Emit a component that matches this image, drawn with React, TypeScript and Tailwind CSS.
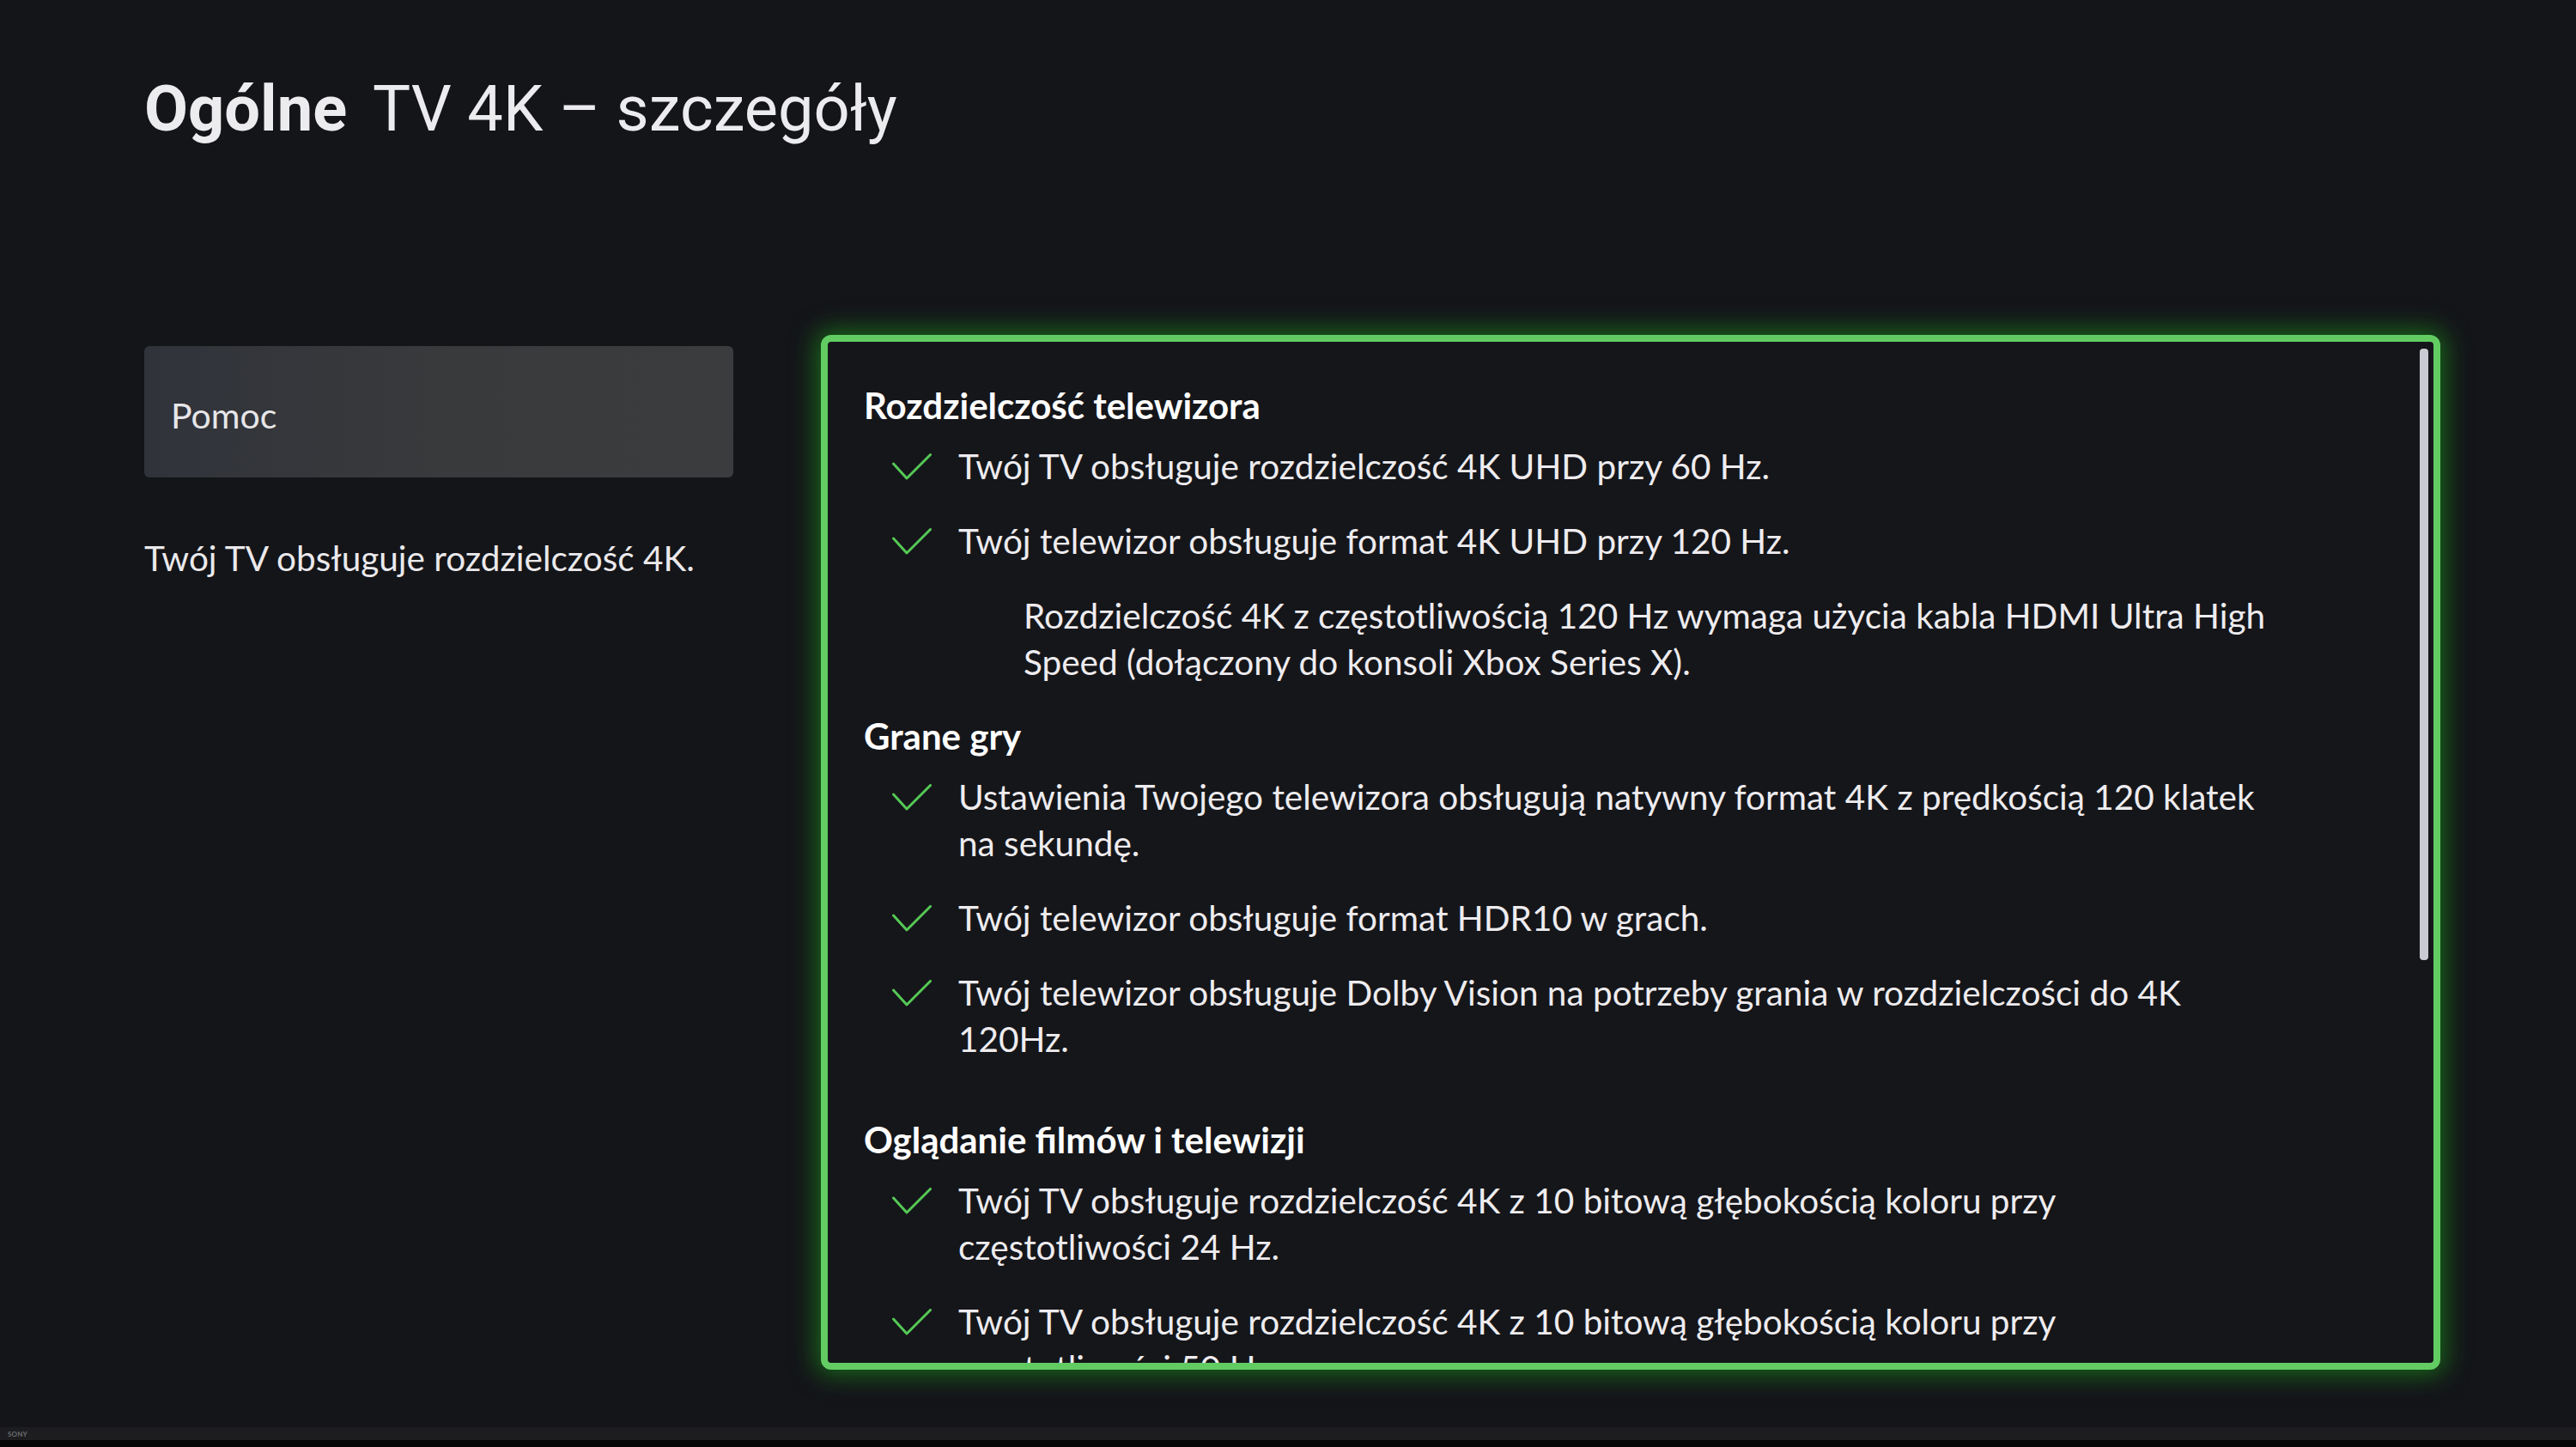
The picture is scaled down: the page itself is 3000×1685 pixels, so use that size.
import type { ReactNode } from "react";

type Entry = {
  kind: "check" | "note";
  lines: string[];
};

type Section = {
  title: string;
  spacing: string;
  entries: Entry[];
};

const SECTIONS: Section[] = [
  {
    title: "Rozdzielczość telewizora",
    spacing: "",
    entries: [
      { kind: "check", lines: ["Twój TV obsługuje rozdzielczość 4K UHD przy 60 Hz."] },
      { kind: "check", lines: ["Twój telewizor obsługuje format 4K UHD przy 120 Hz."] },
      {
        kind: "note",
        lines: [
          "Rozdzielczość 4K z częstotliwością 120 Hz wymaga użycia kabla HDMI Ultra High",
          "Speed (dołączony do konsoli Xbox Series X).",
        ],
      },
    ],
  },
  {
    title: "Grane gry",
    spacing: "mt-[32px]",
    entries: [
      {
        kind: "check",
        lines: [
          "Ustawienia Twojego telewizora obsługują natywny format 4K z prędkością 120 klatek",
          "na sekundę.",
        ],
      },
      { kind: "check", lines: ["Twój telewizor obsługuje format HDR10 w grach."] },
      {
        kind: "check",
        lines: [
          "Twój telewizor obsługuje Dolby Vision na potrzeby grania w rozdzielczości do 4K",
          "120Hz.",
        ],
      },
    ],
  },
  {
    title: "Oglądanie filmów i telewizji",
    spacing: "mt-[63px]",
    entries: [
      {
        kind: "check",
        lines: [
          "Twój TV obsługuje rozdzielczość 4K z 10 bitową głębokością koloru przy",
          "częstotliwości 24 Hz.",
        ],
      },
      {
        kind: "check",
        lines: [
          "Twój TV obsługuje rozdzielczość 4K z 10 bitową głębokością koloru przy",
          "częstotliwości 50 Hz.",
        ],
      },
    ],
  },
];

function CheckMark() {
  return (
    <svg width="46" height="31" viewBox="0 0 46 31" className="shrink-0" fill="none">
      <path
        d="M1.5 12 L17 29 L44.5 1.5"
        stroke="#55c955"
        strokeWidth="3"
        strokeLinecap="round"
        strokeLinejoin="round"
      />
    </svg>
  );
}

function Lines({ lines }: { lines: string[] }) {
  return (
    <div className="whitespace-nowrap">
      {lines.map((line) => (
        <span key={line} className="block">
          {line}
        </span>
      ))}
    </div>
  );
}

function EntryRow({ entry }: { entry: Entry }): ReactNode {
  if (entry.kind === "note") {
    return (
      <div className="pl-[186px]">
        <Lines lines={entry.lines} />
      </div>
    );
  }
  return (
    <div className="flex gap-[31px] pl-[33px]">
      <div className="flex h-[54px] items-center">
        <CheckMark />
      </div>
      <Lines lines={entry.lines} />
    </div>
  );
}

export default function App() {
  return (
    <div className="flex h-[1685px] w-[3000px] flex-col overflow-hidden bg-black font-['Lato',sans-serif]">
      {/* screen */}
      <div className="flex-1 bg-[#141519] pl-[168px] pt-[90px]">
        <h1 className="flex items-baseline gap-[30px] font-['Roboto',sans-serif] text-[74px] leading-none text-[#ececef]">
          <span className="font-bold">Ogólne</span>
          <span>TV 4K – szczegóły</span>
        </h1>

        <div className="mt-[226px] flex gap-[102px]">
          <div className="mt-[13px] flex w-[686px] flex-col">
            <div className="flex h-[153px] items-center rounded-md bg-gradient-to-r from-[#30333a] via-[#393a3c] to-[#3b3c3d] px-[31px] pt-[8px] text-[41px] text-[#e6e6e8]">
              Pomoc
            </div>
            <p className="mt-[67px] text-[40.5px] leading-[54px] text-[#ebe9ec]">
              Twój TV obsługuje rozdzielczość 4K.
            </p>
          </div>

          <div className="relative h-[1205px] w-[1886px] overflow-hidden rounded-xl border-[8px] border-[#62cc62] bg-[#15161a] pl-[42px] pt-[47px] shadow-[0_0_28px_6px_rgba(30,170,30,0.55)]">
            <div className="flex flex-col text-[40.5px] leading-[54px] text-[#eeecef]">
              {SECTIONS.map((section) => (
                <section key={section.title} className={section.spacing}>
                  <h2 className="mb-[17px] text-[42px] font-bold text-white">{section.title}</h2>
                  <div className="flex flex-col gap-[33px]">
                    {section.entries.map((entry) => (
                      <EntryRow key={entry.lines[0] + entry.lines.length} entry={entry} />
                    ))}
                  </div>
                </section>
              ))}
            </div>
            {/* scroll thumb */}
            <div className="absolute right-[6px] top-[8px] h-[712px] w-[10px] rounded-sm bg-[#c9cad2]" />
          </div>
        </div>
      </div>

      {/* tv bezel */}
      <div className="flex h-[15px] items-center bg-[#1d1d20] pl-[9px] text-[8px] font-bold tracking-wide text-[#6b6b70]">
        SONY
      </div>
      <div className="h-[8px] bg-[#070708]" />
    </div>
  );
}
